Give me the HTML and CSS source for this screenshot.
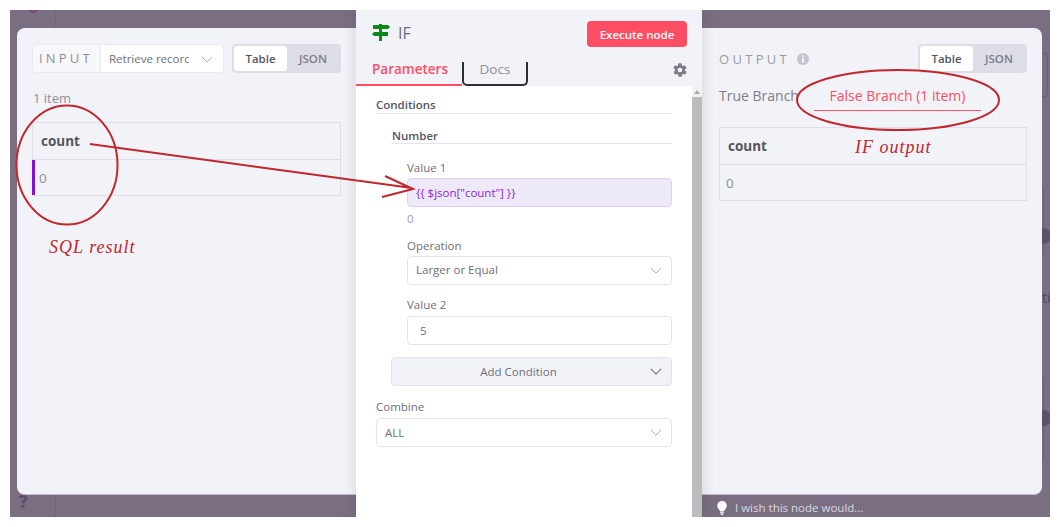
FILE: index.html
```html
<!DOCTYPE html>
<html lang="en">
<head>
    <meta charset="UTF-8">
    <title>IF node</title>
    <link rel="stylesheet" href="styles.css">
</head>
<body>
<div class="frame">
    <!-- canvas behind the modal -->
    <div class="canvas-line"></div>
    <div class="canvas-logo"></div>
    <div class="canvas-node node-a"></div>
    <div class="canvas-node node-b"></div>
    <div class="canvas-node node-c"></div>
    <div class="canvas-dot dot-a"></div>
    <div class="canvas-dot dot-b"></div>
    <div class="canvas-text">ti</div>
    <div class="canvas-help">?</div>

    <div class="panel">
        <section class="side input-side">
            <div class="side-head">
                <div class="input-picker">
                    <span class="input-title">INPUT</span>
                    <span class="input-select">
                        <span class="input-select-text">Retrieve records</span>
                        <svg class="chevron" viewBox="0 0 14 8"><path d="M1 1l6 6 6-6"/></svg>
                    </span>
                </div>
                <div class="toggle">
                    <span class="toggle-on">Table</span>
                    <span class="toggle-off">JSON</span>
                </div>
            </div>
            <div class="item-count">1 item</div>
            <div class="data-table">
                <div class="data-head">count</div>
                <div class="data-row data-row-marked">0</div>
            </div>
        </section>

        <section class="node">
            <div class="node-head">
                <div class="node-title">
                    <svg class="node-icon" viewBox="0 0 18 18">
                        <path d="M7 0h3v1h6l2 2-2 2H10v3h6v4H10v5H7v-5H2L0 10l2-2h5V5H1V1h6z"/>
                    </svg>
                    <span>IF</span>
                </div>
                <button class="execute">Execute node</button>
            </div>
            <div class="tabs">
                <span class="tab tab-active">Parameters</span>
                <span class="tab tab-docs">Docs</span>
                <svg class="gear" viewBox="0 0 24 24">
                    <path d="M19.4 13a7.5 7.5 0 0 0 0-2l2.1-1.6a.5.5 0 0 0 .1-.6l-2-3.5a.5.5 0 0 0-.6-.2l-2.5 1a7.3 7.3 0 0 0-1.7-1l-.4-2.7a.5.5 0 0 0-.5-.4h-4a.5.5 0 0 0-.5.4l-.4 2.7a7.3 7.3 0 0 0-1.7 1l-2.5-1a.5.5 0 0 0-.6.2l-2 3.5a.5.5 0 0 0 .1.6L4.6 11a7.5 7.5 0 0 0 0 2l-2.1 1.6a.5.5 0 0 0-.1.6l2 3.5a.5.5 0 0 0 .6.2l2.5-1a7.3 7.3 0 0 0 1.7 1l.4 2.7a.5.5 0 0 0 .5.4h4a.5.5 0 0 0 .5-.4l.4-2.7a7.3 7.3 0 0 0 1.7-1l2.5 1a.5.5 0 0 0 .6-.2l2-3.5a.5.5 0 0 0-.1-.6zM12 15.5a3.5 3.5 0 1 1 0-7 3.5 3.5 0 0 1 0 7z"/>
                </svg>
            </div>
            <div class="node-body">
                <div class="params">
                    <div class="section-title">Conditions</div>
                    <div class="section-title sub-title">Number</div>
                    <div class="fields">
                        <label class="field-label">Value 1</label>
                        <div class="box box-tight box-expr">{{ $json["count"] }}</div>
                        <div class="hint">0</div>
                        <label class="field-label label-op">Operation</label>
                        <div class="box box-tight box-select">
                            Larger or Equal
                            <svg class="chevron" viewBox="0 0 14 8"><path d="M1 1l6 6 6-6"/></svg>
                        </div>
                        <label class="field-label label-v2">Value 2</label>
                        <div class="box box-num">5</div>
                    </div>
                    <div class="add-row">
                        <span>Add Condition</span>
                        <svg class="chevron chevron-dark" viewBox="0 0 14 8"><path d="M1 1l6 6 6-6"/></svg>
                    </div>
                    <label class="field-label label-combine">Combine</label>
                    <div class="box">
                        ALL
                        <svg class="chevron" viewBox="0 0 14 8"><path d="M1 1l6 6 6-6"/></svg>
                    </div>
                </div>
                <div class="scrollbar">
                    <div class="scroll-arrow"></div>
                    <div class="scroll-thumb"></div>
                </div>
            </div>
        </section>

        <section class="side output-side">
            <div class="side-head output-head">
                <div class="output-title">
                    <span>OUTPUT</span>
                    <svg class="info" viewBox="0 0 12 12">
                        <circle cx="6" cy="6" r="6"/>
                        <rect class="info-mark" x="5" y="5" width="2" height="4.5"/>
                        <rect class="info-mark" x="5" y="2.5" width="2" height="1.6"/>
                    </svg>
                </div>
                <div class="toggle">
                    <span class="toggle-on">Table</span>
                    <span class="toggle-off">JSON</span>
                </div>
            </div>
            <div class="branches">
                <span class="branch">True Branch</span>
                <span class="branch branch-active">False Branch (1 item)</span>
            </div>
            <div class="data-table">
                <div class="data-head">count</div>
                <div class="data-row">0</div>
            </div>
        </section>
    </div>

    <div class="feedback">
        <svg class="bulb" viewBox="0 0 10 14">
            <path d="M5 0a4.8 4.8 0 0 0-3 8.5c.6.6 1 1.3 1 2h4c0-.7.4-1.4 1-2A4.8 4.8 0 0 0 5 0z"/>
            <rect x="3" y="11.2" width="4" height="1.2"/>
            <rect x="3.8" y="13" width="2.4" height="1"/>
        </svg>
        <span>I wish this node would...</span>
    </div>
</div>

<!-- red notes drawn on top of the screenshot -->
<svg class="notes" viewBox="0 0 1060 527">
    <ellipse cx="67" cy="165" rx="50.5" ry="59.5"/>
    <ellipse cx="898" cy="100" rx="101" ry="30"/>
    <path d="M90 144L412 188M385 176L413 189L382 197"/>
</svg>
<span class="note note-sql">SQL result</span>
<span class="note note-if">IF output</span>
</body>
</html>
```

FILE: styles.css
```css
* {
    box-sizing: border-box;
}
body {
    margin: 0;
    width: 1060px;
    height: 527px;
    overflow: hidden;
    background: white;
    font-family: "Open Sans", Arial, sans-serif;
    position: relative;
}
.frame {
    position: relative;
    margin: 10px;
    width: 1040px;
    height: 507px;
    padding: 18px 8px 22px 7px;
    background: #796e82;
    overflow: hidden;
}

/* canvas bits */
.canvas-line {
    position: absolute;
    left: 45px;
    top: 0;
    bottom: 0;
    width: 1px;
    background: #716679;
}
.canvas-logo {
    position: absolute;
    left: 19px;
    top: -5px;
    width: 8px;
    height: 8px;
    border: 2px solid #7c4968;
    border-radius: 50%;
}
.canvas-node {
    position: absolute;
    left: 1020px;
    width: 18px;
    border: 1px solid #695e72;
    border-radius: 4px;
}
.node-a {
    top: 43px;
    height: 44px;
}
.node-b {
    top: 175px;
    height: 72px;
    width: 14px;
}
.node-c {
    top: 365px;
    height: 88px;
    width: 14px;
}
.canvas-dot {
    position: absolute;
    left: 1025px;
    width: 16px;
    height: 16px;
    border-radius: 50%;
    background: #5b5268;
}
.dot-a {
    top: 218px;
}
.dot-b {
    top: 400px;
}
.canvas-text {
    position: absolute;
    left: 1032px;
    top: 278px;
    font-size: 14px;
    color: #4f4658;
}
.canvas-help {
    position: absolute;
    left: 9px;
    top: 480px;
    font-size: 17px;
    font-weight: 800;
    color: #5b5068;
}

/* modal */
.panel {
    position: relative;
    display: grid;
    grid-template-columns: 339px 346px 340px;
    height: 467px;
    background: #f2f3f8;
    border-radius: 8px;
    border-bottom: 1px solid #c4c0ca;
}
.side {
    padding: 16px 15px;
}
.side-head {
    display: flex;
    justify-content: space-between;
    height: 29px;
}
.input-side {
    padding-right: 0;
}
.input-side .side-head {
    justify-content: flex-start;
    gap: 8px;
}
.input-picker {
    display: flex;
    width: 192px;
    height: 29px;
    border: 1px solid #e8e9f1;
    border-radius: 4px;
    background: white;
}
.input-title {
    width: 68px;
    padding-left: 6px;
    line-height: 27px;
    font-size: 13px;
    letter-spacing: 3.2px;
    color: #8e8e98;
    background: #f7f8fb;
    border-right: 1px solid #e8e9f1;
    border-radius: 4px 0 0 4px;
    white-space: nowrap;
}
.input-select {
    position: relative;
    flex: 1;
    padding-left: 8px;
    font-size: 11.5px;
    line-height: 27px;
    color: #6e6e78;
}
.input-select-text {
    display: block;
    width: 80px;
    overflow: hidden;
    white-space: nowrap;
}
.input-select .chevron {
    right: 10px;
    top: 11px;
}
.toggle {
    display: flex;
    width: 109px;
    height: 29px;
    padding: 2px;
    background: #dcdde6;
    border-radius: 4px;
    font-size: 11.5px;
    font-weight: 600;
    line-height: 25px;
    text-align: center;
}
.toggle-on {
    width: 53px;
    background: white;
    border-radius: 3px;
    color: #55555f;
}
.toggle-off {
    flex: 1;
    color: #7d7d87;
}
.item-count {
    margin-top: 16px;
    height: 33px;
    font-size: 13px;
    line-height: 18px;
    color: #8e8e98;
    padding-left: 1px;
}
.data-table {
    height: 74px;
    border: 1px solid #dedfe8;
}
.input-side .data-table {
    width: 309px;
}
.data-head {
    height: 37px;
    padding-left: 8px;
    border-bottom: 1px solid #dedfe8;
    font-size: 13.5px;
    font-weight: 700;
    line-height: 36px;
    color: #55555f;
}
.data-row {
    height: 35px;
    padding-left: 6px;
    font-size: 13.5px;
    line-height: 37px;
    color: #8e8e98;
}
.data-row-marked {
    border-left: 3px solid #8413cf;
    margin-left: -1px;
    padding-left: 4px;
}

/* middle column */
.node {
    display: flex;
    flex-direction: column;
    margin: -18px 0 -22px;
    background: #f2f3f8;
    border-radius: 0 0 8px 8px;
    box-shadow: 0 0 14px rgba(60, 55, 70, 0.18);
    position: relative;
}
.node-head {
    display: flex;
    justify-content: space-between;
    height: 52px;
    padding: 11px 15px 0 16px;
}
.node-title {
    display: flex;
    align-items: center;
    height: 24px;
    font-size: 16px;
    color: #6e6e78;
}
.node-icon {
    width: 18px;
    height: 18px;
    margin-right: 8px;
    fill: #0a8a16;
}
.execute {
    width: 100px;
    height: 26px;
    padding: 0;
    border: none;
    border-radius: 4px;
    background: #ff4d64;
    color: white;
    font-family: inherit;
    font-size: 11.5px;
    font-weight: 600;
}
.tabs {
    position: relative;
    display: flex;
    height: 24px;
    font-size: 13.5px;
    font-weight: 600;
    line-height: 14px;
}
.tab {
    display: block;
}
.tab-active {
    width: 106px;
    padding-left: 16px;
    color: #ff4d64;
    border-bottom: 2px solid #ff4d64;
}
.tab-docs {
    width: 66px;
    text-align: center;
    color: #8e8e98;
    font-weight: 500;
    border: 2px solid #2f2f35;
    border-top: none;
    border-radius: 0 0 5px 5px;
}
.gear {
    position: absolute;
    right: 14px;
    top: 0;
    width: 16px;
    height: 16px;
    fill: #7d7d87;
}
.node-body {
    flex: 1;
    display: flex;
    background: white;
    border-radius: 0 0 8px 8px;
}
.params {
    width: 336px;
    padding: 10px 20px 0;
}
.scrollbar {
    width: 10px;
    background: #f2f2f2;
    border-radius: 0 0 8px 0;
    overflow: hidden;
}
.scroll-arrow {
    width: 0;
    height: 0;
    margin: 4px auto 3px;
    border-left: 3px solid transparent;
    border-right: 3px solid transparent;
    border-bottom: 4px solid #a8a8a8;
}
.scroll-thumb {
    height: 430px;
    background: #bcbcbc;
}
.section-title {
    height: 18px;
    border-bottom: 1px solid #e3e3ee;
    font-size: 11.5px;
    font-weight: 600;
    line-height: 17px;
    color: #55555f;
}
.sub-title {
    margin: 12px 0 0 15px;
    padding-left: 1px;
    line-height: 19px;
}
.fields {
    margin-left: 31px;
}
.field-label {
    display: block;
    font-size: 11.5px;
    line-height: 14px;
    color: #6e6e78;
}
.fields > .field-label:first-child {
    margin-top: 17px;
}
.box {
    position: relative;
    height: 29px;
    margin-top: 4px;
    padding-left: 8px;
    border: 1px solid #e3e3ee;
    border-radius: 4px;
    background: white;
    font-size: 11.5px;
    line-height: 27px;
    color: #6e6e78;
}
.box-expr {
    background: #eee9f8;
    border-color: #dfd0f2;
    color: #8a1fd6;
}
.box-tight {
    margin-top: 3px;
}
.box-select {
    line-height: 26px;
}
.box-num {
    padding-left: 12px;
}
.hint {
    margin-top: 5px;
    font-size: 11.5px;
    line-height: 14px;
    color: #a0a0a8;
}
.label-op {
    margin-top: 13px;
}
.label-v2 {
    margin-top: 13px;
}
.add-row {
    position: relative;
    height: 29px;
    margin: 12px 0 0 15px;
    padding-right: 26px;
    border: 1px solid #e3e3ee;
    border-radius: 4px;
    background: #f2f3f8;
    font-size: 11.5px;
    line-height: 28px;
    text-align: center;
    color: #6e6e78;
}
.label-combine {
    margin-top: 14px;
}
.chevron {
    position: absolute;
    right: 9px;
    top: 10px;
    width: 12px;
    height: 7px;
    fill: none;
    stroke: #a8a8b0;
    stroke-width: 1.1;
}
.chevron-dark {
    stroke: #6e6e78;
    stroke-width: 1.3;
}

/* right column */
.output-side {
    padding: 16px 15px 16px 17px;
}
.output-title {
    display: flex;
    align-items: center;
    gap: 7px;
    font-size: 13px;
    letter-spacing: 3.3px;
    color: #9a9aa3;
}
.info {
    width: 12px;
    height: 12px;
    fill: #c4c4cc;
}
.info-mark {
    fill: #f2f3f8;
}
.branches {
    display: flex;
    height: 48px;
    margin-top: 6px;
    font-size: 14px;
    line-height: 33px;
}
.branch {
    color: #7d7d87;
    white-space: nowrap;
}
.branch-active {
    width: 167px;
    height: 32px;
    margin-left: 15px;
    text-align: center;
    color: #ff4d64;
    border-bottom: 1.5px solid #ff4d64;
}

.feedback {
    position: absolute;
    left: 707px;
    top: 491px;
    display: flex;
    align-items: center;
    gap: 8px;
    font-size: 11.5px;
    line-height: 14px;
    color: #dcd8e0;
}
.bulb {
    width: 10px;
    height: 14px;
    fill: white;
}

/* annotations */
.notes {
    position: absolute;
    left: 0;
    top: 0;
    width: 1060px;
    height: 527px;
    fill: none;
    stroke: #c1272d;
    stroke-width: 2;
}
.note {
    position: absolute;
    font-family: "Liberation Serif", serif;
    font-style: italic;
    font-size: 18px;
    line-height: 20px;
    letter-spacing: 1px;
    color: #c1272d;
    white-space: nowrap;
}
.note-sql {
    left: 49px;
    top: 237px;
}
.note-if {
    left: 855px;
    top: 137px;
}
```
